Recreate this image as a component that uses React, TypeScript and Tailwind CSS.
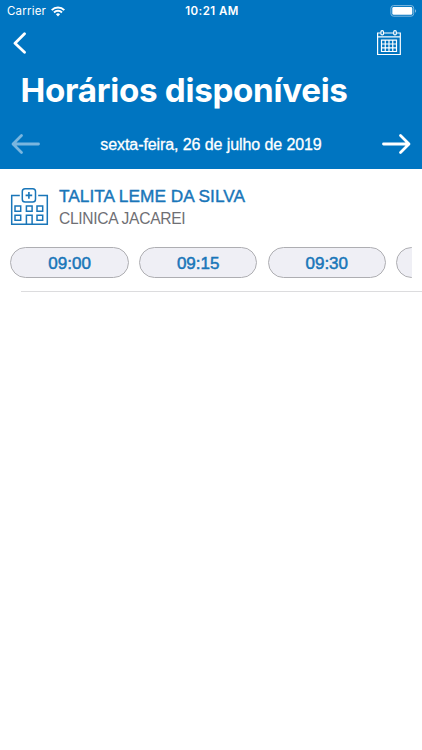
import type { ReactNode } from "react"

const SLOTS = ["09:00", "09:15", "09:30", ""]

function StatusBar() {
  return (
    <div className="flex h-[22px] items-center pl-[7px] pr-[5px] font-['Inter',sans-serif] text-[11.5px] text-white">
      <div className="flex flex-1 items-center gap-[5px]">
        <span className="pt-[2px] tracking-[0.2px]">Carrier</span>
        <svg width="14" height="11" viewBox="0 0 14 11" fill="none" stroke="currentColor" strokeWidth="2">
          <path d="M0.7 4.1a8.9 8.9 0 0 1 12.6 0" />
          <path d="M3 6.5a5.7 5.7 0 0 1 8 0" />
          <path d="M7 10.5L4.9 8.3a3 3 0 0 1 4.2 0z" fill="currentColor" stroke="none" />
        </svg>
      </div>
      <span className="pt-[2px] font-semibold tracking-[0.45px]">10:21 AM</span>
      <div className="flex flex-1 justify-end">
        <svg width="27" height="12" viewBox="0 0 27 12" fill="none">
          <rect x="0.9" y="0.6" width="22.8" height="10.6" rx="2.6" stroke="#7fb9e0" />
          <rect x="2.3" y="2" width="20" height="7.8" rx="1.4" fill="#fff" />
          <path d="M25 4.2c1.5.5 1.5 3 0 3.5z" fill="#7fb9e0" />
        </svg>
      </div>
    </div>
  )
}

function CalendarIcon() {
  return (
    <svg width="26" height="27" viewBox="0 0 26 27" fill="none" stroke="currentColor" strokeWidth="1.2">
      <path d="M4.5 3H1.6V24.5H24.3V3H20.7M7.7 3H17.5M1.6 6.8H24.3" />
      <rect x="4.9" y="0.7" width="2.6" height="4.2" rx="1.2" />
      <rect x="17.7" y="0.7" width="2.6" height="4.2" rx="1.2" />
      <path d="M5.5 10.2H20.5V21.5H5.5zM5.5 14H20.5M5.5 17.8H20.5M9.25 10.2V21.5M13 10.2V21.5M16.75 10.2V21.5" />
    </svg>
  )
}

function ClinicIcon() {
  return (
    <svg width="39" height="39" viewBox="0 0 39 39" fill="none" stroke="#1976b9" strokeWidth="1.5">
      <path d="M9.8 8.5H1.7V37.3H37.3V8.5H28.2" />
      <rect x="12.3" y="1.8" width="13.2" height="13.2" rx="2.8" />
      <path d="M18.9 5.1V11.7M15.6 8.4H22.2" strokeWidth="1.6" />
      <path d="M5 19H10.7V24.2H5zM16.4 19H22.1V24.2H16.4zM27 19H32.7V24.2H27z" />
      <path d="M5 28.2H10.7V33.2H5zM27 28.2H32.7V33.2H27zM16.4 37.3V28.2H22.1V37.3" />
    </svg>
  )
}

function Arrow({ children, className = "" }: { children: ReactNode; className?: string }) {
  return (
    <button className={className}>
      <svg width="30" height="22" viewBox="0 0 30 22" fill="none" stroke="currentColor" strokeWidth="2.8" strokeLinecap="round" strokeLinejoin="round">
        {children}
      </svg>
    </button>
  )
}

export default function App() {
  return (
    <div className="min-h-screen w-full overflow-hidden bg-white font-['Liberation_Sans',sans-serif]">
      <header className="flex h-[169px] flex-col bg-[#0075c1] text-white">
        <StatusBar />
        <div className="flex h-[42px] items-center justify-between pl-[12px] pr-[20px]">
          <button>
            <svg width="15" height="22" viewBox="0 0 15 22" fill="none" stroke="currentColor" strokeWidth="2.8" strokeLinecap="round" strokeLinejoin="round">
              <path d="M12.5 1.7L3 11.2L12.5 20.2" />
            </svg>
          </button>
          <button><CalendarIcon /></button>
        </div>
        <h1 className="h-[56px] pl-[20.5px] font-['Inter',sans-serif] text-[33.2px] font-bold leading-[53px] tracking-[-0.3px] whitespace-nowrap">
          Horários disponíveis
        </h1>
        <div className="flex h-[48px] items-center justify-between px-[11px]">
          <Arrow className="text-[#7ab6df]"><path d="M27.5 11H2.5M10.5 2.5L2 11L10.5 19.5" /></Arrow>
          <span className="pt-px text-[16px] tracking-[-0.09px] [-webkit-text-stroke:0.3px_currentColor]">sexta-feira, 26 de julho de 2019</span>
          <Arrow><path d="M2.5 11H27M19.5 2.5L28 11L19.5 19.5" /></Arrow>
        </div>
      </header>

      <main>
        <div className="flex h-[78px] pl-[10px] pt-[16px]">
          <div className="pt-[2px]"><ClinicIcon /></div>
          <div className="pl-[10px]">
            <p className="text-[17.3px] leading-[22px] text-[#1976b9] [-webkit-text-stroke:0.4px_currentColor]">TALITA LEME DA SILVA</p>
            <p className="text-[15.6px] leading-[23px] tracking-[-0.3px] text-[#6f6f74]">CLINICA JACAREI</p>
          </div>
        </div>
        <div className="mx-[10.4px] flex gap-[10.2px] overflow-hidden">
          {SLOTS.map((slot, i) => (
            <button key={i} className="h-[31px] w-[118.4px] shrink-0 rounded-full border border-[#aeaeb2] bg-[#efeff5] pt-[2px] text-[17px] text-[#1976b9] [-webkit-text-stroke:0.5px_currentColor]">
              {slot}
            </button>
          ))}
        </div>
        <div className="ml-[21px] mt-[13px] h-px bg-[#dcdcde]" />
      </main>
    </div>
  )
}
